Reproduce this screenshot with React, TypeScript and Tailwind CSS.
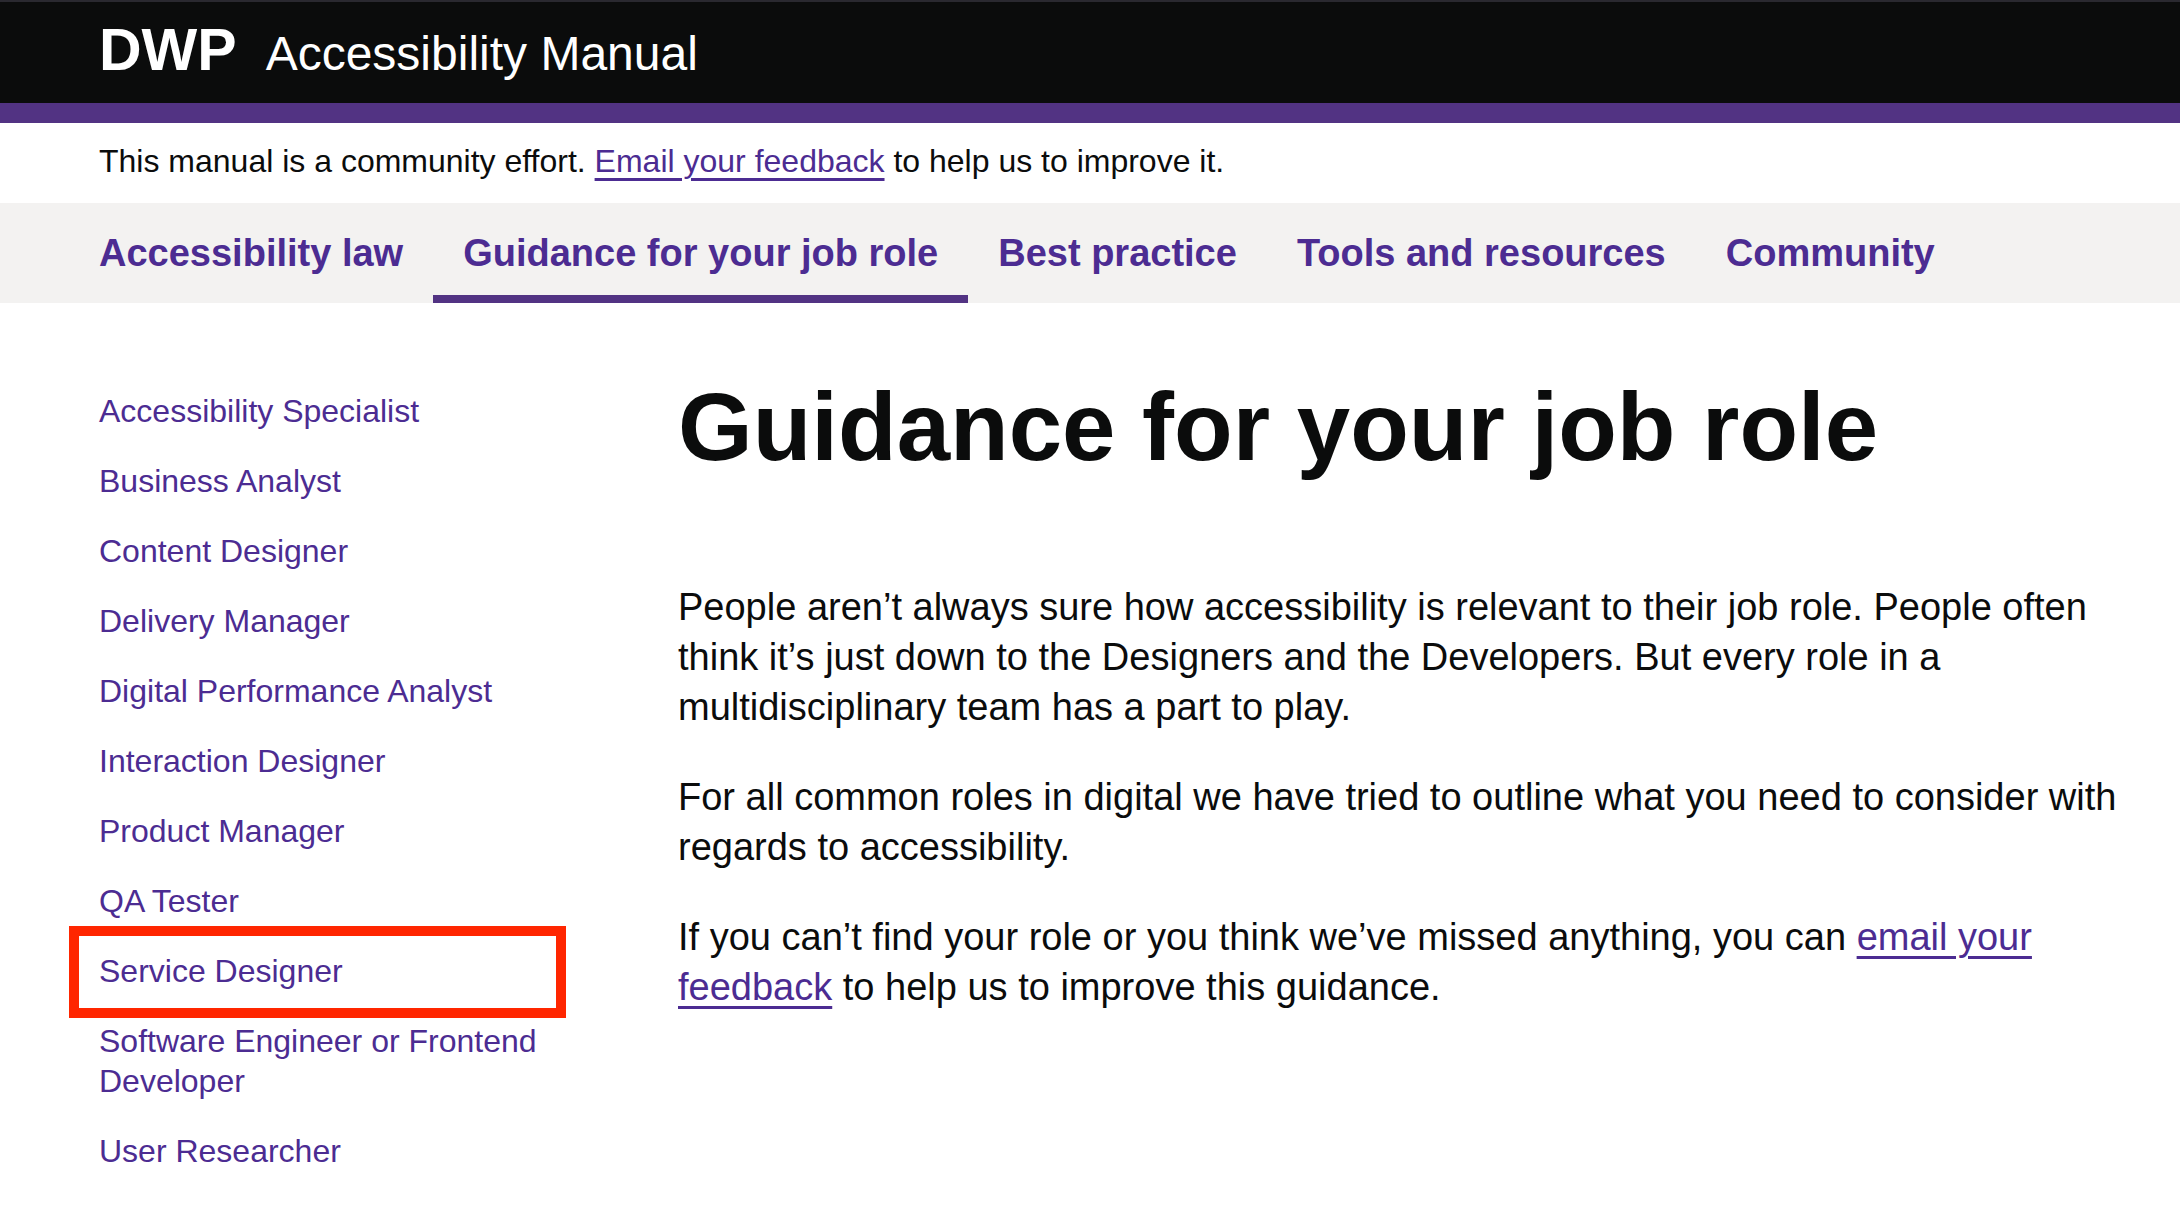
import React from "react";

const roles = [
  "Accessibility Specialist",
  "Business Analyst",
  "Content Designer",
  "Delivery Manager",
  "Digital Performance Analyst",
  "Interaction Designer",
  "Product Manager",
  "QA Tester",
  "Service Designer",
  "Software Engineer or Frontend Developer",
  "User Researcher",
];

const tabs = [
  { label: "Accessibility law", active: false },
  { label: "Guidance for your job role", active: true },
  { label: "Best practice", active: false },
  { label: "Tools and resources", active: false },
  { label: "Community", active: false },
];

const font = "font-['Liberation_Sans',Arial,Helvetica,sans-serif]";

function App() {
  return (
    <div className={`min-h-screen w-full bg-white text-[#0b0c0c] ${font}`}>
      {/* header */}
      <header>
        <div className="h-[2px] bg-[#2a2930]" />
        <div className="h-[101px] bg-[#0b0c0c] pl-[99px] pt-[19px]">
          <div className="flex items-baseline gap-[29px] text-white leading-none">
            <span className="text-[59px] font-bold">DWP</span>
            <span className="text-[48px]">Accessibility Manual</span>
          </div>
        </div>
        <div className="h-[20px] bg-[#523383]" />
      </header>

      {/* feedback banner */}
      <div className="pl-[99px] pt-[18px] pb-[22px] text-[32px] leading-[40px]">
        This manual is a community effort.{" "}
        <a href="#" className="text-[#4c2c92] underline decoration-[3px] underline-offset-[6px]">
          Email your feedback
        </a>{" "}
        to help us to improve it.
      </div>

      {/* top navigation */}
      <nav className="h-[100px] bg-[#f3f2f1] pl-[69px]">
        <ul className="flex">
          {tabs.map((tab) => (
            <li
              key={tab.label}
              className={`px-[30px] pt-[25px] pb-[17px] border-b-[8px] text-[38px] font-bold leading-[50px] text-[#4c2c92] whitespace-nowrap ${
                tab.active ? "border-[#523383]" : "border-transparent"
              }`}
            >
              {tab.label}
            </li>
          ))}
        </ul>
      </nav>

      {/* body */}
      <div className="flex pl-[99px] gap-[99px]">
        <aside className="w-[480px] shrink-0 pt-[88px]">
          <ul className="flex flex-col gap-[30px]">
            {roles.map((role) => (
              <li key={role} className="relative text-[32px] leading-[40px] text-[#4c2c92]">
                {role === "Service Designer" && (
                  <div className="absolute -left-[30px] -top-[25px] w-[497px] h-[92px] border-[10px] border-[#ff2600]" />
                )}
                <a href="#">{role}</a>
              </li>
            ))}
          </ul>
        </aside>

        <main className="w-[1462px] pt-[74px]">
          <h1 className="text-[96px] font-bold leading-[100px] mb-[105px]">
            Guidance for your job role
          </h1>
          <div className="flex flex-col gap-[40px] text-[38px] leading-[50px]">
            <p>
              People aren’t always sure how accessibility is relevant to their job role. People often
              think it’s just down to the Designers and the Developers. But every role in a
              multidisciplinary team has a part to play.
            </p>
            <p>
              For all common roles in digital we have tried to outline what you need to consider with
              regards to accessibility.
            </p>
            <p>
              If you can’t find your role or you think we’ve missed anything, you can{" "}
              <a href="#" className="text-[#4c2c92] underline decoration-[3px] underline-offset-[6px]">
                email your feedback
              </a>{" "}
              to help us to improve this guidance.
            </p>
          </div>
        </main>
      </div>
    </div>
  );
}

export default App;
